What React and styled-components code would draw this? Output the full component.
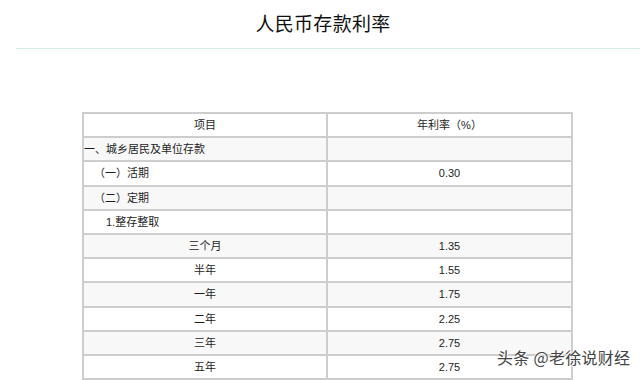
import React from 'react';
import styled, { createGlobalStyle } from 'styled-components';

const rows = [
  { label: '项目', rate: '年利率（%）', indent: 'center' },
  { label: '一、城乡居民及单位存款', rate: '', indent: 0 },
  { label: '（一）活期', rate: '0.30', indent: 10 },
  { label: '（二）定期', rate: '', indent: 10 },
  { label: '1.整存整取', rate: '', indent: 22 },
  { label: '三个月', rate: '1.35', indent: 'center' },
  { label: '半年', rate: '1.55', indent: 'center' },
  { label: '一年', rate: '1.75', indent: 'center' },
  { label: '二年', rate: '2.25', indent: 'center' },
  { label: '三年', rate: '2.75', indent: 'center' },
  { label: '五年', rate: '2.75', indent: 'center' },
];

const App = () => {
  return (
    <>
      <GlobalStyle />
      <Page>
        <Header>
          <Title>人民币存款利率</Title>
        </Header>
        <Rule />
        <TableWrap>
          <Table>
            <colgroup>
              <LabelCol />
              <col />
            </colgroup>
            <tbody>
              {rows.map((row, i) => (
                <Row key={i} $shade={i % 2 === 1}>
                  <LabelCell $indent={row.indent}>{row.label}</LabelCell>
                  <RateCell>{row.rate}</RateCell>
                </Row>
              ))}
            </tbody>
          </Table>
        </TableWrap>
        <Watermark>头条 @老徐说财经</Watermark>
      </Page>
    </>
  );
};

export default App;

const GlobalStyle = createGlobalStyle`
  html, body {
    margin: 0;
    padding: 0;
    background: #fff;
  }
`;

const Page = styled.div`
  position: relative;
  width: 640px;
  height: 380px;
  overflow: hidden;
  font-family: "Liberation Sans", "Noto Sans CJK SC", sans-serif;
  color: #222;
`;

const Header = styled.div`
  height: 44px;
  display: flex;
  align-items: center;
  justify-content: center;
  padding-left: 6px;
`;

const Title = styled.h1`
  margin: 0;
  font-family: "Noto Sans CJK SC", sans-serif;
  font-size: 19px;
  font-weight: 400;
  color: #111;
  letter-spacing: 0.3px;
`;

const Rule = styled.div`
  margin: 4px 0 0 16px;
  height: 1px;
  background: #d5ebe7;
  box-shadow: 0 2px 3px rgba(200, 225, 220, 0.35);
`;

const TableWrap = styled.div`
  padding: 63px 0 0 82px;
`;

const Table = styled.table`
  width: 491px;
  border-collapse: collapse;
  table-layout: fixed;
  border: 2px solid #cdcdcd;
`;

const LabelCol = styled.col`
  width: 244px;
`;

const Row = styled.tr`
  height: 24.2px;
  background: ${(p) => (p.$shade ? '#f8f8f8' : '#fff')};
`;

const Cell = styled.td`
  border: 2px solid #cdcdcd;
  padding: 0;
  font-size: 11px;
  line-height: 14px;
  color: #1e1e1e;
  white-space: nowrap;
`;

const LabelCell = styled(Cell)`
  text-align: ${(p) => (p.$indent === 'center' ? 'center' : 'left')};
  padding-left: ${(p) => (p.$indent === 'center' ? 0 : p.$indent)}px;
`;

const RateCell = styled(Cell)`
  text-align: center;
`;

const Watermark = styled.div`
  position: absolute;
  left: 497px;
  top: 345px;
  font-family: "Noto Sans CJK SC", sans-serif;
  font-size: 16px;
  color: #444;
  letter-spacing: 0.3px;
  text-shadow: 0 0 2px #fff, 0 0 2px #fff, 1px 1px 0 #fff;
`;
